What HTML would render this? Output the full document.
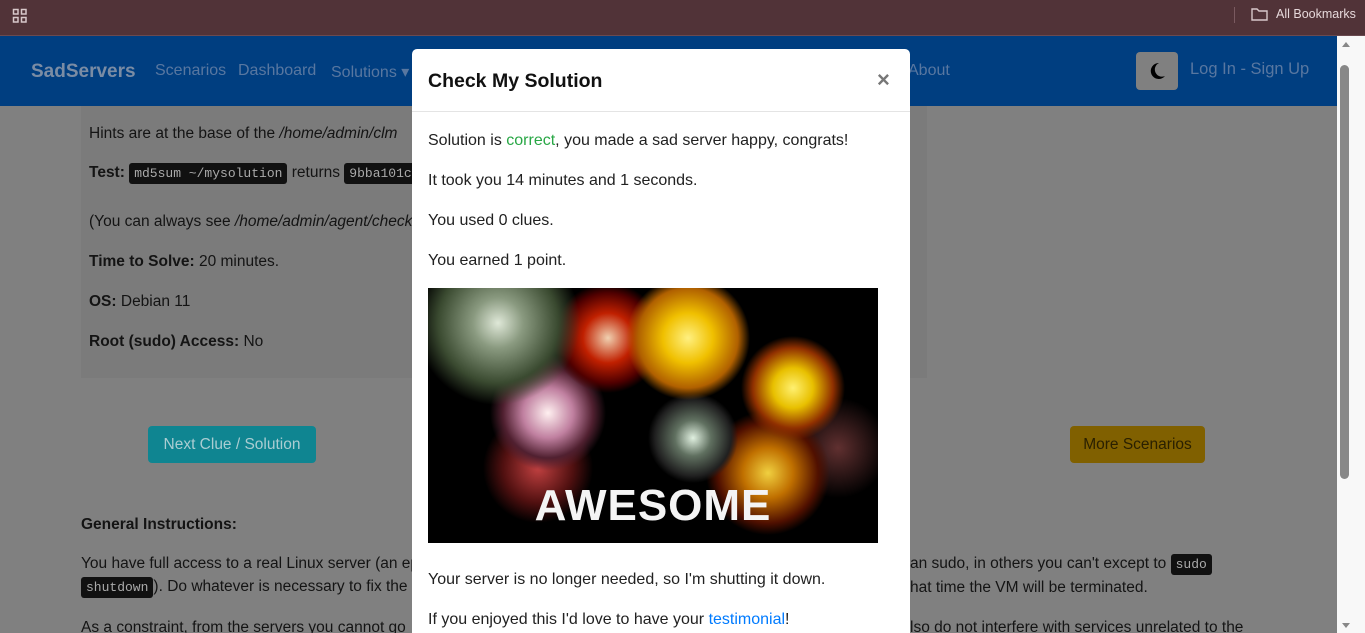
<!DOCTYPE html>
<html style="width:1365px;height:633px;overflow:hidden"><head><meta charset="utf-8"><style>
*{margin:0;padding:0;box-sizing:border-box}
body{width:1365px;height:633px;overflow:hidden;position:relative;font-family:"Liberation Sans",sans-serif;background:#808080;color:#111}
.chrome{position:absolute;left:0;top:0;width:1365px;height:36px;background:#513338;border-bottom:1px solid #6a4a50}
.nav{position:absolute;left:0;top:36px;width:1337px;height:70px;background:#003e80}
.abs{position:absolute;white-space:nowrap}
.navl{color:#5877a0;font-size:16px;top:62px}
.card{position:absolute;left:81px;top:106px;width:846px;height:272px;background:#7b7b7b}
.t{font-size:15.5px;color:#141414}
code{font-family:"Liberation Mono",monospace;font-size:13px;background:#111;color:#aaa;padding:3px 5px;border-radius:3px}
.sb{position:absolute;left:1337px;top:36px;width:28px;height:597px;background:#f8f8f8}
.modal{position:absolute;left:412px;top:49px;width:498px;height:584px;background:#fff;border-radius:5px 5px 0 0;overflow:hidden}
.m{font-size:16px;color:#212121;left:16px}
</style></head><body>
<div class="chrome">
<svg class="abs" style="left:12px;top:8px" width="16" height="16"><g fill="none" stroke="#d8c8ca" stroke-width="1.5"><rect x="1.5" y="1.5" width="4.5" height="4.5"/><rect x="9.5" y="1.5" width="4.5" height="4.5"/><rect x="1.5" y="9.5" width="4.5" height="4.5"/><rect x="9.5" y="9.5" width="4.5" height="4.5"/></g></svg>
<div class="abs" style="left:1234px;top:7px;width:1px;height:16px;background:#7a5a60"></div>
<svg class="abs" style="left:1251px;top:7px" width="17" height="14"><path d="M1 2h5l2 2h8v9H1z" fill="none" stroke="#d8c8ca" stroke-width="1.4"/></svg>
<div class="abs" style="left:1276px;top:7px;font-size:12.5px;color:#e6d8da">All Bookmarks</div>
</div>
<div class="nav"></div>
<div class="abs" style="left:31px;top:61px;font-size:19px;font-weight:bold;color:#7a8ca4">SadServers</div>
<div class="abs navl" style="left:155px">Scenarios</div>
<div class="abs navl" style="left:238px">Dashboard</div>
<div class="abs navl" style="left:331px">Solutions ▾</div>
<div class="abs navl" style="left:908px">About</div>
<div class="abs" style="left:1136px;top:52px;width:42px;height:38px;background:#808080;border-radius:4px"></div>
<svg class="abs" style="left:1147px;top:61px" width="20" height="20"><path d="M12 2a8 8 0 1 0 6 13 7 7 0 0 1-6-13z" fill="#000"/></svg>
<div class="abs" style="left:1190px;top:60px;font-size:16.5px;color:#5877a0">Log In - Sign Up</div>
<div class="sb"><div style="position:absolute;left:3px;top:29px;width:9px;height:414px;background:#888;border-radius:5px"></div>
<div style="position:absolute;left:5px;top:6px;width:0;height:0;border:4px solid transparent;border-bottom:5px solid #888;border-top:0"></div>
<div style="position:absolute;left:5px;top:587px;width:0;height:0;border:4px solid transparent;border-top:5px solid #888;border-bottom:0"></div></div>
<div class="card"></div>
<div class="abs t" style="left:89px;top:125px">Hints are at the base of the <i>/home/admin/clm</i></div>
<div class="abs t" style="left:89px;top:164px"><b>Test:</b> <code>md5sum ~/mysolution</code> returns <code>9bba101c</code></div>
<div class="abs t" style="left:89px;top:213px">(You can always see <i>/home/admin/agent/check</i></div>
<div class="abs t" style="left:89px;top:253px"><b>Time to Solve:</b> 20 minutes.</div>
<div class="abs t" style="left:89px;top:293px"><b>OS:</b> Debian 11</div>
<div class="abs t" style="left:89px;top:333px"><b>Root (sudo) Access:</b> No</div>
<div class="abs" style="left:148px;top:426px;width:168px;height:37px;background:#0f8591;border-radius:4px;color:#aacdd2;font-size:15.5px;text-align:center;line-height:37px">Next Clue / Solution</div>
<div class="abs" style="left:1070px;top:426px;width:135px;height:37px;background:#806000;border-radius:4px;color:#2a2000;font-size:15.5px;text-align:center;line-height:37px">More Scenarios</div>
<div class="abs t" style="left:81px;top:516px"><b>General Instructions:</b></div>
<div class="abs t" style="left:81px;top:555px">You have full access to a real Linux server (an ep</div>
<div class="abs t" style="left:81px;top:578px"><code>shutdown</code>). Do whatever is necessary to fix the p</div>
<div class="abs t" style="left:81px;top:619px">As a constraint, from the servers you cannot go</div>
<div class="abs t" style="left:910px;top:555px">an sudo, in others you can't except to <code>sudo</code></div>
<div class="abs t" style="left:910px;top:579px">hat time the VM will be terminated.</div>
<div class="abs t" style="left:910px;top:619px">lso do not interfere with services unrelated to the</div>
<div class="modal">
<div class="abs" style="left:16px;top:21px;font-size:19.5px;font-weight:bold;color:#111">Check My Solution</div>
<div class="abs" style="left:465px;top:18px;font-size:22px;font-weight:bold;color:#777">×</div>
<div class="abs" style="left:0;top:62px;width:498px;height:1px;background:#e4e4e4"></div>
<div class="abs m" style="top:83px">Solution is <span style="color:#28a745">correct</span>, you made a sad server happy, congrats!</div>
<div class="abs m" style="top:123px">It took you 14 minutes and 1 seconds.</div>
<div class="abs m" style="top:163px">You used 0 clues.</div>
<div class="abs m" style="top:203px">You earned 1 point.</div>
<div class="abs" style="left:16px;top:239px;width:450px;height:255px;background:
radial-gradient(circle at 70px 35px,#dfe8d8 0,#8a9a80 25px,#3a4a30 60px,transparent 82px),
radial-gradient(circle at 260px 50px,#fff080 0,#f0c000 25px,#b06000 50px,transparent 62px),
radial-gradient(circle at 365px 100px,#fff070 0,#e8c000 20px,#903000 40px,transparent 52px),
radial-gradient(circle at 180px 50px,#f0d0b0 0,#c02000 25px,#500000 45px,transparent 55px),
radial-gradient(circle at 120px 125px,#fff0f0 0,#c080a0 25px,#502030 45px,transparent 58px),
radial-gradient(circle at 265px 150px,#e0f0e0 0,#607060 18px,#202020 38px,transparent 45px),
radial-gradient(circle at 340px 185px,#f0d040 0,#c07000 25px,#501000 50px,transparent 62px),
radial-gradient(circle at 110px 180px,#c04040 0,#501010 35px,transparent 55px),
radial-gradient(circle at 410px 160px,#603030 0,transparent 50px),#000">
<div class="abs" style="left:0;width:450px;top:193px;text-align:center;font-size:44px;font-weight:bold;color:#f4f4f4;letter-spacing:1px">AWESOME</div></div>
<div class="abs m" style="top:522px">Your server is no longer needed, so I'm shutting it down.</div>
<div class="abs m" style="top:562px">If you enjoyed this I'd love to have your <span style="color:#007bff">testimonial</span>!</div>
</div>
</body></html>
